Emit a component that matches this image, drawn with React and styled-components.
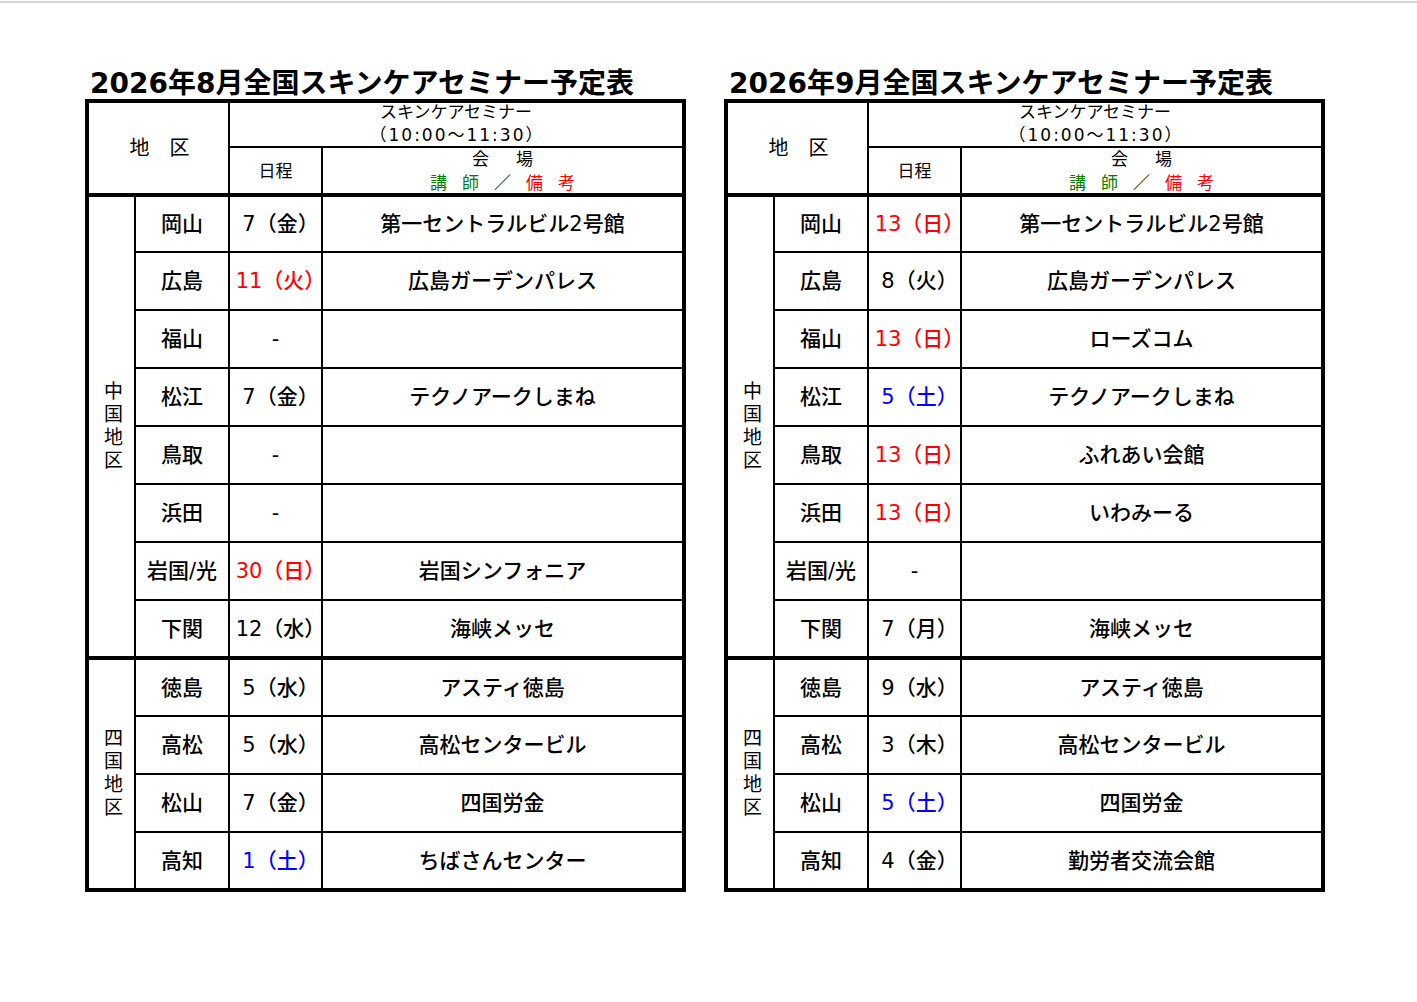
import React from "react"
import styled, { createGlobalStyle } from "styled-components"

const GlobalStyle = createGlobalStyle`
  body {
    margin: 0;
    background: #fff;
    color: #000;
    font-family: "DejaVu Sans", "Noto Sans CJK JP", sans-serif;
  }
`

const RED = "#ff0000"
const BLUE = "#0000ff"
const GREEN = "#008000"

const sheets = [
  {
    title: "2026年8月全国スキンケアセミナー予定表",
    groups: [
      {
        name: "中国地区",
        rows: [
          ["岡山", "7（金）", "", "第一セントラルビル2号館"],
          ["広島", "11（火）", RED, "広島ガーデンパレス"],
          ["福山", "-", "", ""],
          ["松江", "7（金）", "", "テクノアークしまね"],
          ["鳥取", "-", "", ""],
          ["浜田", "-", "", ""],
          ["岩国/光", "30（日）", RED, "岩国シンフォニア"],
          ["下関", "12（水）", "", "海峡メッセ"],
        ],
      },
      {
        name: "四国地区",
        rows: [
          ["徳島", "5（水）", "", "アスティ徳島"],
          ["高松", "5（水）", "", "高松センタービル"],
          ["松山", "7（金）", "", "四国労金"],
          ["高知", "1（土）", BLUE, "ちばさんセンター"],
        ],
      },
    ],
  },
  {
    title: "2026年9月全国スキンケアセミナー予定表",
    groups: [
      {
        name: "中国地区",
        rows: [
          ["岡山", "13（日）", RED, "第一セントラルビル2号館"],
          ["広島", "8（火）", "", "広島ガーデンパレス"],
          ["福山", "13（日）", RED, "ローズコム"],
          ["松江", "5（土）", BLUE, "テクノアークしまね"],
          ["鳥取", "13（日）", RED, "ふれあい会館"],
          ["浜田", "13（日）", RED, "いわみーる"],
          ["岩国/光", "-", "", ""],
          ["下関", "7（月）", "", "海峡メッセ"],
        ],
      },
      {
        name: "四国地区",
        rows: [
          ["徳島", "9（水）", "", "アスティ徳島"],
          ["高松", "3（木）", "", "高松センタービル"],
          ["松山", "5（土）", BLUE, "四国労金"],
          ["高知", "4（金）", "", "勤労者交流会館"],
        ],
      },
    ],
  },
]

export default function App() {
  return (
    <>
      <GlobalStyle />
      <TopRule />
      <Sheets>
        {sheets.map((sheet) => (
          <Sheet key={sheet.title}>
            <Title>{sheet.title}</Title>
            <Table>
              <Cell $span={2} $rows={2} $bottom={4}>
                <AreaHead>地　区</AreaHead>
              </Cell>
              <Cell $span={2} $noRight>
                <HeadLines $lh={23} $shift={-2}>
                  <div>スキンケアセミナー</div>
                  <div>
                    <Spaced $gap={2}>（10:00～11:30）</Spaced>
                  </div>
                </HeadLines>
              </Cell>
              <Cell $bottom={4}>
                <HeadLines $lh={24}>日程</HeadLines>
              </Cell>
              <Cell $bottom={4} $noRight>
                <HeadLines $lh={24}>
                  <div>
                    <Spaced $gap={27}>会場</Spaced>
                  </div>
                  <div>
                    <Spaced $gap={15}>
                      <Colored $color={GREEN}>講師</Colored>／
                      <Colored $color={RED}>備考</Colored>
                    </Spaced>
                  </div>
                </HeadLines>
              </Cell>

              {sheet.groups.map((group, gi) => {
                const lastGroup = gi === sheet.groups.length - 1
                const edge = lastGroup ? 0 : 4
                return (
                  <React.Fragment key={group.name}>
                    <Cell $rows={group.rows.length} $bottom={edge}>
                      <Region>{group.name}</Region>
                    </Cell>
                    {group.rows.map(([city, date, color, venue], ri) => {
                      const bottom = ri === group.rows.length - 1 ? edge : 2
                      return (
                        <React.Fragment key={city}>
                          <Cell $bottom={bottom}>
                            <Text>{city}</Text>
                          </Cell>
                          <Cell $bottom={bottom}>
                            <DateText $color={color} $dash={date === "-"}>
                              {date}
                            </DateText>
                          </Cell>
                          <Cell $bottom={bottom} $noRight>
                            <Text>{venue}</Text>
                          </Cell>
                        </React.Fragment>
                      )
                    })}
                  </React.Fragment>
                )
              })}
            </Table>
          </Sheet>
        ))}
      </Sheets>
    </>
  )
}

const TopRule = styled.div`
  margin-top: 1px;
  height: 2px;
  background: #d6d6d6;
`

const Sheets = styled.div`
  display: flex;
  gap: 38px;
  padding: 67px 0 0 85px;
`

const Sheet = styled.div`
  display: flex;
  flex-direction: column;
  width: 601px;
`

const Title = styled.h2`
  margin: 0 0 1px;
  padding-left: 5px;
  font-size: 28px;
  line-height: 28px;
  font-weight: 700;
  white-space: nowrap;
`

const Table = styled.div`
  display: grid;
  box-sizing: border-box;
  width: 601px;
  grid-template-columns: 47px 94px 93px 359px;
  grid-template-rows: 45px 49px 56px 58px 58px 58px 58px 58px 58px 59px 57px 58px 58px 55px;
  border: 4px solid #000;
`

const Cell = styled.div`
  box-sizing: border-box;
  display: flex;
  align-items: center;
  justify-content: center;
  grid-column: ${(p) => (p.$span ? `span ${p.$span}` : "auto")};
  grid-row: ${(p) => (p.$rows ? `span ${p.$rows}` : "auto")};
  border-right: ${(p) => (p.$noRight ? "none" : "2px solid #000")};
  border-bottom: ${(p) => (p.$bottom === undefined ? 2 : p.$bottom)}px solid #000;
  text-align: center;
`

const AreaHead = styled.span`
  font-size: 20px;
  line-height: 20px;
  padding-left: 2px;
`

const HeadLines = styled.div`
  font-size: 17px;
  line-height: ${(p) => p.$lh}px;
  margin-top: ${(p) => p.$shift || 0}px;
  white-space: nowrap;
`

const Spaced = styled.span`
  letter-spacing: ${(p) => p.$gap}px;
  padding-left: ${(p) => p.$gap}px;
`

const Colored = styled.span`
  color: ${(p) => p.$color};
`

const Region = styled.span`
  writing-mode: vertical-rl;
  text-orientation: upright;
  font-size: 19px;
  line-height: 19px;
  letter-spacing: 4px;
`

const Text = styled.span`
  font-size: 21px;
  line-height: 24px;
  font-weight: 500;
  white-space: nowrap;
`

const DateText = styled(Text)`
  color: ${(p) => p.$color || "#000"};
  padding-left: ${(p) => (p.$dash ? 0 : 10)}px;
`
